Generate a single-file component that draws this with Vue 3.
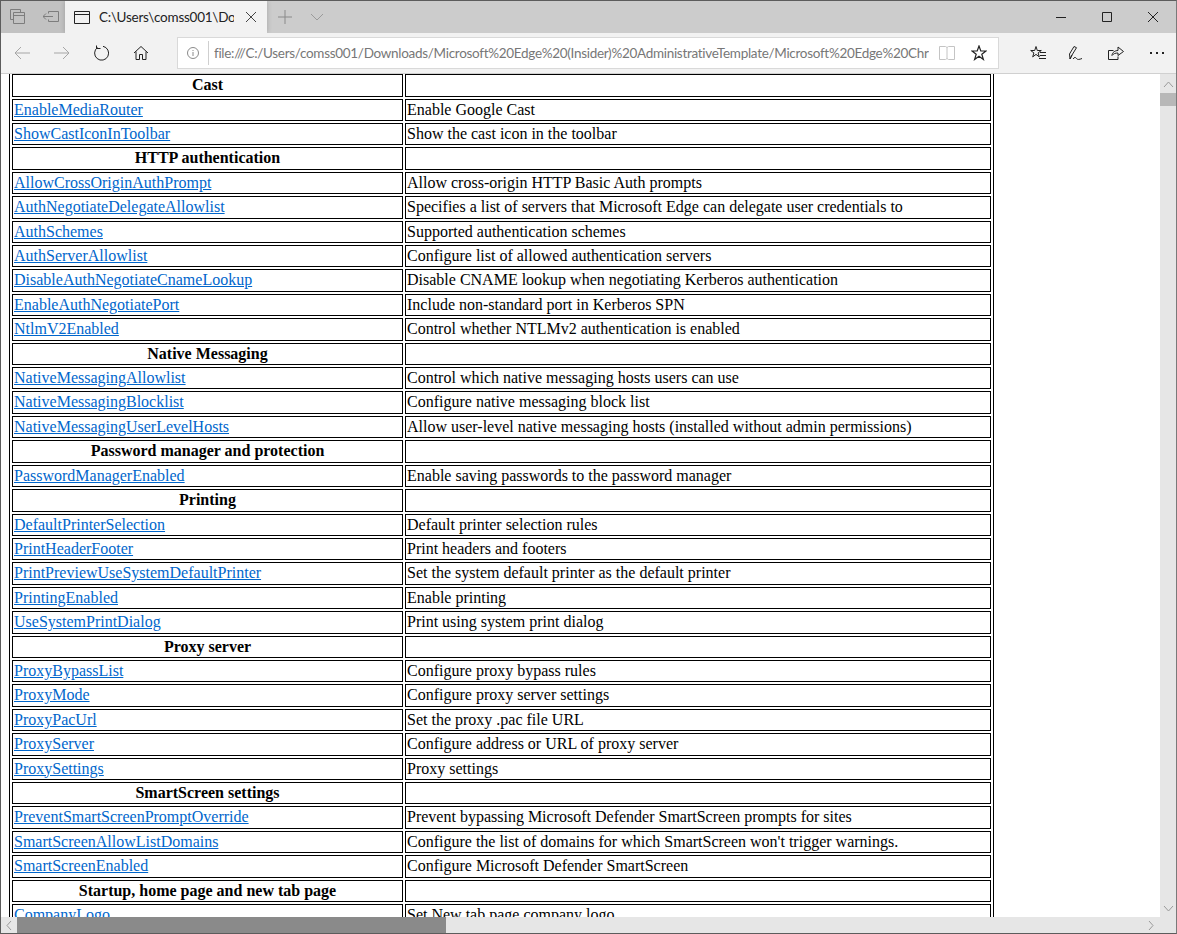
<template>
	<div class="window">
		<div class="tabbar">
			<div class="tab-tools">
				<svg width="16" height="16" viewBox="0 0 16 16"><path d="M.5.500h10v3M.5.500v10h3M3.500 3.500h11v11h-11zM3.500 6.500h11" fill="none" stroke="#7d7d7d"/></svg>
				<svg width="16" height="12" viewBox="0 0 16 12"><path d="M5.500 2.500v-2h10v10h-10v-2M0 5.500h10M3 2.500l-3 3 3 3" fill="none" stroke="#7d7d7d"/></svg>
			</div>
			<div class="tab">
				<svg width="16" height="13" viewBox="0 0 16 13"><path d="M.5.500h15v12h-15zM.5 3.500h15" fill="none" stroke="#222"/></svg>
				<span class="tab-title">C:\Users\comss001\Dow</span>
				<svg width="12" height="12" viewBox="0 0 12 12"><path d="M1 1l10 10M11 1L1 11" stroke="#444" fill="none"/></svg>
			</div>
			<svg class="plus" width="14" height="14" viewBox="0 0 14 14"><path d="M7 0v14M0 7h14" stroke="#8a8a8a"/></svg>
			<svg class="chev" width="14" height="8" viewBox="0 0 14 8"><path d="M1 1l6 6 6-6" stroke="#9a9a9a" fill="none"/></svg>
			<div class="win-ctrls">
				<svg width="46" height="12" viewBox="0 0 46 12"><path d="M18 6.500h10" stroke="#222"/></svg>
				<svg width="46" height="12" viewBox="0 0 46 12"><path d="M18.500 1.500h9v9h-9z" stroke="#222" fill="none"/></svg>
				<svg width="46" height="12" viewBox="0 0 46 12"><path d="M18 1l10 10M28 1L18 11" stroke="#222" fill="none"/></svg>
			</div>
		</div>
		<div class="toolbar">
			<div class="nav">
				<svg width="16" height="14" viewBox="0 0 16 14"><path d="M16 7H1M7 1L1 7l6 6" stroke="#a6a6a6" fill="none"/></svg>
				<svg width="16" height="14" viewBox="0 0 16 14"><path d="M0 7h15M9 1l6 6-6 6" stroke="#a6a6a6" fill="none"/></svg>
				<svg width="16" height="16" viewBox="0 0 16 16"><path d="M4.500 2.500A7 7 0 1 0 10 1.300M3.500.500v3h4" stroke="#222" fill="none"/></svg>
				<svg width="16" height="16" viewBox="0 0 16 16"><path d="M1 8l7-6.500L15 8M3 6.500v8h3.500v-5h3v5H13v-8" stroke="#222" fill="none"/></svg>
			</div>
			<div class="address">
				<svg width="12" height="12" viewBox="0 0 12 12"><circle cx="6" cy="6" r="5.500" stroke="#8a8a8a" fill="none"/><path d="M6 5v4M6 3v1" stroke="#8a8a8a"/></svg>
				<span class="addr-sep"></span>
				<span class="url">file:///C:/Users/comss001/Downloads/Microsoft%20Edge%20(Insider)%20AdministrativeTemplate/Microsoft%20Edge%20Chr</span>
				<svg class="book" width="16" height="14" viewBox="0 0 16 14"><path d="M.5.500h6l1.500 1 1.500-1h6v13h-6L8 12.500l-1.500 1h-6zM8 1.500v11" stroke="#c4c4c4" fill="none"/></svg>
				<svg class="star" width="16" height="16" viewBox="0 0 16 16"><path d="M8 1l1.800 5h5.200l-4.200 3.200 1.600 5.300L8 11.300l-4.400 3.200 1.600-5.300L1 6h5.200z" stroke="#222" stroke-width="1.200" fill="none"/></svg>
			</div>
			<div class="actions">
				<svg width="16" height="16" viewBox="0 0 16 16"><path d="M6 1.500l1.300 4h4l-3.200 2.400 1.200 4-3.300-2.500-3.300 2.500 1.200-4L.700 5.500h4zM10 7.500h6M10 10.500h6M9 13.500h7" stroke="#222" fill="none"/></svg>
				<svg width="18" height="16" viewBox="0 0 18 16"><path d="M2 14L1.500 9 6 1.500l2.500 1.200L4 10zM2 14l2-4M5 14c1.500-2 2.500-2 3.500-.5s3 1 5.500 0" stroke="#222" fill="none"/></svg>
				<svg width="16" height="14" viewBox="0 0 16 14"><path d="M5.500 4.500h-5v9h9.500v-3M4 9.500c0-3 3-5 6-5V1l5.500 4.500L10 9.500V7c-2.500 0-4.500.5-6 2.500z" stroke="#222" fill="none"/></svg>
				<span class="dots"><i></i><i></i><i></i></span>
			</div>
		</div>
		<div class="viewport">
			<div class="page">
				<table class="policy-table">
					<tbody>
						<tr v-for="row in rows" :key="row[0]">
							<th v-if="row.length == 1">{{ row[0] }}</th>
							<td v-else class="name"><a>{{ row[0] }}</a></td>
							<td class="desc">{{ row[1] }}</td>
						</tr>
					</tbody>
				</table>
			</div>
			<div class="vscroll">
				<svg width="11" height="7" viewBox="0 0 11 7"><path d="M1 6l4.500-5L10 6" stroke="#9a9a9a" fill="none"/></svg>
				<div class="vthumb"></div>
				<svg class="vdown" width="11" height="7" viewBox="0 0 11 7"><path d="M1 1l4.500 5L10 1" stroke="#9a9a9a" fill="none"/></svg>
			</div>
		</div>
		<div class="hscroll">
			<svg width="6" height="11" viewBox="0 0 6 11"><path d="M5 1L1 5.500 5 10" stroke="#9a9a9a" fill="none"/></svg>
			<div class="hthumb"></div>
			<svg class="hright" width="6" height="11" viewBox="0 0 6 11"><path d="M1 1l4 4.500L1 10" stroke="#9a9a9a" fill="none"/></svg>
		</div>
	</div>
</template>

<script setup>
const rows = [
	['Cast'],
	['EnableMediaRouter', 'Enable Google Cast'],
	['ShowCastIconInToolbar', 'Show the cast icon in the toolbar'],
	['HTTP authentication'],
	['AllowCrossOriginAuthPrompt', 'Allow cross-origin HTTP Basic Auth prompts'],
	['AuthNegotiateDelegateAllowlist', 'Specifies a list of servers that Microsoft Edge can delegate user credentials to'],
	['AuthSchemes', 'Supported authentication schemes'],
	['AuthServerAllowlist', 'Configure list of allowed authentication servers'],
	['DisableAuthNegotiateCnameLookup', 'Disable CNAME lookup when negotiating Kerberos authentication'],
	['EnableAuthNegotiatePort', 'Include non-standard port in Kerberos SPN'],
	['NtlmV2Enabled', 'Control whether NTLMv2 authentication is enabled'],
	['Native Messaging'],
	['NativeMessagingAllowlist', 'Control which native messaging hosts users can use'],
	['NativeMessagingBlocklist', 'Configure native messaging block list'],
	['NativeMessagingUserLevelHosts', 'Allow user-level native messaging hosts (installed without admin permissions)'],
	['Password manager and protection'],
	['PasswordManagerEnabled', 'Enable saving passwords to the password manager'],
	['Printing'],
	['DefaultPrinterSelection', 'Default printer selection rules'],
	['PrintHeaderFooter', 'Print headers and footers'],
	['PrintPreviewUseSystemDefaultPrinter', 'Set the system default printer as the default printer'],
	['PrintingEnabled', 'Enable printing'],
	['UseSystemPrintDialog', 'Print using system print dialog'],
	['Proxy server'],
	['ProxyBypassList', 'Configure proxy bypass rules'],
	['ProxyMode', 'Configure proxy server settings'],
	['ProxyPacUrl', 'Set the proxy .pac file URL'],
	['ProxyServer', 'Configure address or URL of proxy server'],
	['ProxySettings', 'Proxy settings'],
	['SmartScreen settings'],
	['PreventSmartScreenPromptOverride', 'Prevent bypassing Microsoft Defender SmartScreen prompts for sites'],
	['SmartScreenAllowListDomains', "Configure the list of domains for which SmartScreen won't trigger warnings."],
	['SmartScreenEnabled', 'Configure Microsoft Defender SmartScreen'],
	['Startup, home page and new tab page'],
	['CompanyLogo', 'Set New tab page company logo']
]
</script>

<style>
html, body {
	margin: 0;
	overflow: hidden;
}
</style>

<style scoped>

.window {
	width: 1177px;
	height: 934px;
	box-sizing: border-box;
	border: 1px solid #5c5c5c;
	border-right: 1px solid #7a7a7a;
	display: flex;
	flex-direction: column;
	overflow: hidden;
	background: #fff;
	font-family: 'Liberation Serif', serif;
}

.tabbar {
	height: 32px;
	flex: none;
	background: #cccccc;
	display: flex;
	align-items: center;
}

.tab-tools {
	width: 64px;
	height: 32px;
	flex: none;
	display: flex;
	align-items: center;
	gap: 17px;
	padding-left: 9px;
	box-sizing: border-box;
	background: #c2c2c2;
}

.tab {
	width: 202px;
	height: 32px;
	flex: none;
	background: #f2f2f2;
	box-shadow: 0 0 5px rgba(0, 0, 0, 0.2);
	display: flex;
	align-items: center;
	padding-left: 9px;
	box-sizing: border-box;
}

.tab-title {
	width: 135px;
	margin: 0 11px 0 9px;
	overflow: hidden;
	white-space: nowrap;
	font: 13.5px 'Lato', sans-serif;
	letter-spacing: -0.25px;
	color: #222;
}

.plus {
	margin-left: 11px;
}

.chev {
	margin-left: 18px;
}

.win-ctrls {
	margin-left: auto;
	display: flex;
}

.toolbar {
	height: 41px;
	flex: none;
	background: #f2f2f2;
	border-bottom: 1px solid #d0d0d0;
	display: flex;
	align-items: center;
	box-sizing: border-box;
}

.nav {
	width: 176px;
	flex: none;
	display: flex;
	align-items: center;
	gap: 23.5px;
	padding-left: 13px;
	box-sizing: border-box;
}

.address {
	width: 822px;
	height: 32px;
	flex: none;
	background: #fff;
	border: 1px solid #d9d9d9;
	box-sizing: border-box;
	display: flex;
	align-items: center;
	padding-left: 9px;
}

.addr-sep {
	width: 1px;
	height: 24px;
	background: #cfcfcf;
	margin: 0 5px 0 9px;
	flex: none;
}

.url {
	flex: 1;
	min-width: 0;
	overflow: hidden;
	white-space: nowrap;
	font: 13.5px 'Lato', sans-serif;
	letter-spacing: -0.3px;
	color: #777;
}

.book {
	margin: 0 16px 0 10px;
	flex: none;
}

.star {
	margin-right: 11px;
	flex: none;
}

.actions {
	flex: 1;
	display: flex;
	align-items: center;
	gap: 22px;
	padding-left: 31px;
}

.dots {
	display: flex;
	gap: 4px;
	margin-left: 4px;
}

.dots i {
	width: 2px;
	height: 2px;
	background: #222;
}

.viewport {
	flex: 1;
	min-height: 0;
	display: flex;
}

.page {
	flex: 1;
	min-width: 0;
	overflow: hidden;
	padding-left: 8px;
}

.policy-table {
	width: 985px;
	margin-top: -1.8px;
	table-layout: fixed;
	border: 1px solid #000;
	border-top: 0;
	border-spacing: 2px;
	border-collapse: separate;
	font-size: 16px;
	line-height: 18.4px;
	color: #000;
}

th, td {
	border: 1px solid #000;
	padding: 1px;
	height: 22.4px;
	box-sizing: border-box;
	white-space: nowrap;
	overflow: hidden;
}

th {
	width: 391px;
	text-align: center;
	font-weight: bold;
}

a {
	color: #0066cc;
	text-decoration: underline;
}

.vscroll {
	width: 16px;
	flex: none;
	background: #e6e6e6;
	display: flex;
	flex-direction: column;
	align-items: center;
	padding-top: 7px;
	box-sizing: border-box;
}

.vthumb {
	width: 16px;
	height: 13px;
	background: #b8b8b8;
	margin-top: 5px;
}

.vdown {
	margin-top: auto;
	margin-bottom: 5px;
}

.hscroll {
	height: 16px;
	flex: none;
	background: #e6e6e6;
	display: flex;
	align-items: center;
	padding-left: 5px;
}

.hthumb {
	width: 429px;
	height: 16px;
	background: #8a8a8a;
	margin-left: 5px;
}

.hright {
	margin-left: auto;
	margin-right: 22px;
}

</style>
